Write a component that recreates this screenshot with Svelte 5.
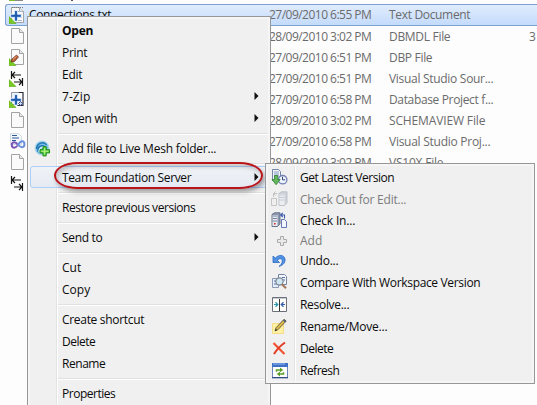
<script>
  const files = [
    { icon: 'text', name: 'Connections.txt', nw: 82, date: '27/09/2010 6:55 PM', type: 'Text Document', w: 81, selected: true },
    { icon: 'blank', date: '28/09/2010 3:02 PM', type: 'DBMDL File', w: 61, size: '3' },
    { icon: 'edit', date: '27/09/2010 6:51 PM', type: 'DBP File', w: 43 },
    { icon: 'source', date: '27/09/2010 6:51 PM', type: 'Visual Studio Sour...', w: 104 },
    { icon: 'project', date: '27/09/2010 6:58 PM', type: 'Database Project f...', w: 104 },
    { icon: 'blank', date: '28/09/2010 3:02 PM', type: 'SCHEMAVIEW File', w: 96 },
    { icon: 'studio', date: '27/09/2010 6:58 PM', type: 'Visual Studio Proj...', w: 101 },
    { icon: 'blank', date: '28/09/2010 3:02 PM', type: 'VS10X File', w: 54 },
    { icon: 'arrows' }
  ];

  const menu = [
    { label: 'Open', w: 31, bold: true },
    { label: 'Print', w: 25 },
    { label: 'Edit', w: 20 },
    { label: '7-Zip', w: 28, sub: true },
    { label: 'Open with', w: 55, sub: true },
    { sep: 8 },
    { label: 'Add file to Live Mesh folder...', w: 154, icon: 'mesh' },
    { sep: 7 },
    { label: 'Team Foundation Server', w: 129, sub: true, hot: true },
    { sep: 8 },
    { label: 'Restore previous versions', w: 133 },
    { sep: 8 },
    { label: 'Send to', w: 40, sub: true },
    { sep: 8 },
    { label: 'Cut', w: 19 },
    { label: 'Copy', w: 28 },
    { sep: 8 },
    { label: 'Create shortcut', w: 82 },
    { label: 'Delete', w: 33 },
    { label: 'Rename', w: 43 },
    { sep: 8 },
    { label: 'Properties', w: 53 }
  ];

  const submenu = [
    { label: 'Get Latest Version', w: 94, h: 22, icon: 'get' },
    { label: 'Check Out for Edit...', w: 106, h: 22, icon: 'checkout', disabled: true },
    { label: 'Check In...', w: 55, h: 21, icon: 'checkin' },
    { label: 'Add', w: 22, h: 19, icon: 'add', disabled: true },
    { label: 'Undo...', w: 38, h: 21, icon: 'undo' },
    { label: 'Compare With Workspace Version', w: 180, h: 22, icon: 'compare' },
    { label: 'Resolve...', w: 49, h: 22, icon: 'resolve' },
    { label: 'Rename/Move...', w: 87, h: 22, icon: 'rename' },
    { label: 'Delete', w: 33, h: 22, icon: 'delete' },
    { label: 'Refresh', w: 39, h: 22, icon: 'refresh' }
  ];

  function fit(node, width) {
    const natural = node.getBoundingClientRect().width;
    node.style.letterSpacing = `${(width + 0.3 - natural) / node.textContent.length}px`;
  }
</script>

{#snippet page()}
  <path d="M2.5.5h8l4 4v11h-12z" fill="#fafafa" stroke="#a3a3a3" />
  <path d="M10.5.5v4h4" fill="#e8e8e8" stroke="#a3a3a3" />
{/snippet}

{#snippet corner()}
  <path d="M0 9.5v7h7z" fill="#7ccb22" stroke="#58a515" stroke-width=".6" />
{/snippet}

{#snippet bigPlus()}
  <path d="M5.4 3.5h3.2v3.7h3.7v3.2H8.6v3.7H5.4v-3.7H1.7V7.2h3.7z" fill="#3f80d2" stroke="#f4f8ff" stroke-width=".8" />
  <path d="M7 4.2v9.2M2.4 8.8h9.2" stroke="#1f59ac" stroke-width="1.6" />
{/snippet}

{#snippet server(x)}
  <path d="M{x} 2.5 {x + 2.5} .8h5.5v11l-2.5 2.7H{x}z" fill="#8e9ab0" stroke="#5c6880" stroke-width=".9" />
  <path d="M{x + .5} 3h5v11h-5z" fill="#e6ebf3" />
  <path d="M{x + .5} 4h4.5M{x + .5} 6.5h4.5M{x + .5} 9h4.5" stroke="#77849c" />
{/snippet}

{#snippet glyph(kind)}
  <svg width="17" height="17" viewBox="0 0 17 17" fill="none" aria-hidden="true">
    {#if kind === 'blank'}
      {@render page()}
    {:else if kind === 'text'}
      {@render page()}
      <path d="M3 .5h11" stroke="#777" stroke-dasharray="1 1" />
      <path d="M5 4.5h8M5 7.5h8M9 10.5h4M9 13.5h4" stroke="#a9b7c4" />
      {@render corner()}
      {@render bigPlus()}
    {:else if kind === 'edit'}
      {@render page()}
      {@render corner()}
      <path d="M2 13 3 10 7.5 6l2 2-4 4.5z" fill="#b95b32" stroke="#693023" stroke-width=".7" />
      <path d="m4 10.5 3.5-3.2" stroke="#f1b187" />
    {:else if kind === 'source' || kind === 'arrows'}
      {#if kind === 'source'}{@render corner()}{/if}
      <path d="M2.5 1v8M3 5h9M6 2 3 5l3 3M13.5 8v8M5 12h8M10 9l3 3-3 3" stroke="#151515" stroke-width="1.2" />
    {:else if kind === 'project'}
      <path d="M2.5 1.5h8v12h-8z" fill="#eef3fa" stroke="#8b96aa" />
      <path d="M9.5 1.5h4.5v13h-6" fill="#fff" stroke="#2a2d38" stroke-width="1.2" />
      {@render corner()}
      {@render bigPlus()}
      <path d="m9.5 12.5 2-2 2 2-2 2z" fill="#cdd8f2" stroke="#3b4b8c" />
    {:else if kind === 'studio'}
      <path d="M1.5.5h8l3 3v8h-11z" fill="#f4f7fc" stroke="#d3dbe7" />
      <path d="M3 2.5h5M3 5h7M3 7.5h4" stroke="#31599d" />
      <path d="M9 12C7.5 9.8 6.3 9 5 9.2c-3 .5-3 5.1 0 5.5 1.6.1 2.8-1.2 4-2.7" stroke="#7c55b4" stroke-width="2" />
      <path d="M8.6 12.3c1.6-2.3 2.9-4.1 4.6-4 3 .3 3 5.6 0 5.9-1.6.1-2.9-1-4.2-2.6" stroke="#6d8edc" stroke-width="2" />
    {:else if kind === 'mesh'}
      <circle cx="8" cy="8" r="7" fill="#7cc0e8" stroke="#b4d9ef" />
      <path d="M2.5 9C3 2.5 10 1 12.5 5M4 12C3 5 10 4 12 9" stroke="#1f76b1" stroke-width="1.4" />
      <path d="M5 12c0-4 3-6 6-4" stroke="#d9f2ff" stroke-width="1.4" />
      <path d="M9 6.7h3.2v3H15.5v3.2h-3.3v3H9v-3H6V9.7h3z" fill="#6bd341" stroke="#19891b" />
      <path d="M10.6 8v6.5M7.3 11.3h7" stroke="#b3f28a" />
    {:else if kind === 'get'}
      <path d="M1.5.5h6l2 2v9h-8z" fill="#f2f6fc" stroke="#7386a8" />
      <path d="M3 3h5M3 5h5M3 7h5" stroke="#8195bb" />
      <circle cx="11.7" cy="10.7" r="4.2" fill="#edf3ff" stroke="#7280b4" stroke-width="1.3" />
      <path d="M11.5 7.8v3h2.6" stroke="#344674" />
      <path d="M3.5 6.5h3.2v4h2.4L5.1 15.7 1 10.5h2.5z" fill="#64b85b" stroke="#2c7c36" stroke-width=".8" />
    {:else if kind === 'checkout'}
      <g opacity=".35">
        {@render server(8)}
        <path d="M.5 7.5h5v7h-5zM2.5 6V2.5h4M4.5.5l-2 2 2 2" fill="#eee" stroke="#777" />
      </g>
    {:else if kind === 'checkin'}
      {@render server(1)}
      <path d="M3 11.8h1.6" stroke="#d22" stroke-width="1.5" />
      <path d="M10.5 7.5h3l2 2v6h-5z" fill="#f3f6ff" stroke="#6478b2" />
      <path d="M13.5 6.5V3H10M11.7 1l-2 2 2 2" stroke="#3a5cad" stroke-width="1.1" />
    {:else if kind === 'add'}
      <path d="M9.5 4.5h3v3h3v3h-3v3h-3v-3h-3v-3h3z" fill="#e9e9e9" stroke="#aaa" />
    {:else if kind === 'undo'}
      <path d="M2 4v6.5h6.5L6.4 8.3C9 5.4 12 6.5 11.2 10c-.3 1.5-1.5 3-3.2 4.5 4.6-1.4 6.5-4.5 6-7.4C13.2 2.7 8 2 4.3 6.1z" fill="#5292e5" stroke="#2867bf" stroke-width=".8" />
    {:else if kind === 'compare'}
      <path d="M7.5.5h6l2 2v8h-8z" fill="#f3f6fc" stroke="#7484a2" />
      <path d="M1.5 4.5h6v9h-6z" fill="#e9effa" stroke="#8a99b7" />
      <path d="M11 3.5h3M12 6h2M3 7h3M3 10h3" stroke="#536da5" />
      <circle cx="8.5" cy="7.5" r="3.6" fill="#cfe6f5" stroke="#7d8791" stroke-width="1.2" />
      <path d="m11 10.3 4 4" stroke="#a5775d" stroke-width="2.2" />
    {:else if kind === 'resolve'}
      <path d="M1.5 1.5h14v14h-14z" fill="#fffef8" stroke="#6b6f79" />
      <path d="M2 2.5h13" stroke="#c8ccd4" />
      <path d="M8.5 3v12" stroke="#333" />
      <path d="M3 8.5h3.5M4.5 6.3l2.3 2.2-2.3 2.2" stroke="#2b97ac" stroke-width="1.2" />
      <path d="M14 8.5h-3.5M12.5 6.3l-2.3 2.2 2.3 2.2" stroke="#345db0" stroke-width="1.2" />
    {:else if kind === 'rename'}
      <path d="M1.5 5.5h11v10h-11z" fill="#fff2a5" stroke="#f4dc88" />
      <path d="m4 13 1-3.2 8-8.5L15.2 3 7 11.6z" fill="#dfbd49" stroke="#5e513d" stroke-width=".9" />
      <path d="m4 13 2-1-1-1z" fill="#222" />
      <path d="m12.5 2 2 2" stroke="#455b85" stroke-width="1.5" />
    {:else if kind === 'delete'}
      <path d="M2.5 3 13.5 14" stroke="#f15333" stroke-width="2.2" />
      <path d="M14 2.5C9 6 6 9 3 14" stroke="#e33b24" stroke-width="2" />
    {:else if kind === 'refresh'}
      <path d="M1.5 1.5h15v14h-15z" fill="#fff" stroke="#6a86bb" />
      <path d="M1 1h16v4H1z" fill="#3f70c7" />
      <path d="M2 2h12" stroke="#91b7f1" />
      <path d="M1 15.7h16" stroke="#2b4686" stroke-width="1.2" />
      <path d="M5.5 9.8V8h4" stroke="#5a9e28" stroke-width="1.5" />
      <path d="m9 5.5 3.2 2.5L9 10.3zM9 9.5 5.8 12 9 14.5z" fill="#5a9e28" />
      <path d="M12.5 10.2V12h-4" stroke="#5a9e28" stroke-width="1.5" />
    {/if}
  </svg>
{/snippet}

<main>
  <div class="previous"><i></i><b></b></div>
  <section class="files">
    {#each files as file}
      <div class="file" class:selected={file.selected}>
        <span class="ficon">{@render glyph(file.icon)}</span>
        <span class="name">{#if file.name}<span use:fit={file.nw}>{file.name}</span>{/if}</span>
        <span class="date">{#if file.date}<span use:fit={102}>{file.date}</span>{/if}</span>
        <span class="type">{#if file.type}<span use:fit={file.w}>{file.type}</span>{/if}</span>
        <span class="size">{file.size ?? ''}</span>
      </div>
    {/each}
  </section>

  <nav class="menu context">
    {#each menu as item}
      {#if item.sep}
        <div class="sep" style:height="{item.sep}px"></div>
      {:else}
        <div class="item" class:hot={item.hot} class:bold={item.bold}>
          <span class="micon">{#if item.icon}{@render glyph(item.icon)}{/if}</span>
          <span use:fit={item.w}>{item.label}</span>
          {#if item.sub}
            <svg class="chev" width="5" height="8" viewBox="0 0 5 8" aria-hidden="true"><path d="M.5 0v8l4-4z" fill="#111" /></svg>
          {/if}
        </div>
      {/if}
    {/each}
  </nav>

  <div class="ring"></div>

  <nav class="menu team">
    {#each submenu as item}
      <div class="item" class:disabled={item.disabled} style:height="{item.h}px">
        <span class="micon">{@render glyph(item.icon)}</span>
        <span use:fit={item.w}>{item.label}</span>
      </div>
    {/each}
  </nav>
</main>

<style>
  :global(body) { margin: 0; }
  main {
    position: relative;
    width: 537px;
    height: 405px;
    overflow: hidden;
    background: #fdfdfd;
    color: #0b0b0b;
    font: 12px/20px "Open Sans", "Noto Sans", sans-serif;
    white-space: nowrap;
  }
  svg { display: block; flex: none; }
  .previous { display: flex; height: 4px; padding-left: 9px; }
  .previous i { width: 14px; height: 1px; background: linear-gradient(90deg, #7bbd2f 6px, #888 6px); }
  .previous b { width: 2px; height: 1px; margin-left: 48px; background: #555; }
  .file { display: flex; align-items: center; box-sizing: border-box; height: 21px; padding-left: 9px; }
  .file:first-child { height: 22px; }
  .file.selected {
    margin-left: 5px;
    padding-left: 3px;
    border: 1px solid #7da2ce;
    border-right: 0;
    border-radius: 3px 0 0 3px;
    background: linear-gradient(#e0ecfd, #c4dbfc);
  }
  .ficon { width: 20px; }
  .name { width: 240px; }
  .date { width: 120px; color: #6b6b6b; }
  .type { width: 140px; color: #6b6b6b; }
  .size { color: #6b6b6b; }
  .menu {
    position: absolute;
    box-sizing: border-box;
    padding: 2px;
    border: 1px solid #979797;
    background: linear-gradient(90deg, transparent 28px, #e2e3e3 28px, #e2e3e3 29px, #fff 29px, #fff 30px, transparent 30px) 0 2px / 100% calc(100% - 4px) no-repeat, #f0f0f0;
    box-shadow: inset 0 0 0 2px #f5f5f5;
  }
  .context { left: 27px; top: 16px; width: 244px; height: 400px; }
  .team { left: 265px; top: 163px; width: 270px; height: 221px; }
  .item { position: relative; display: flex; align-items: center; box-sizing: border-box; height: 22px; line-height: 21px; }
  .micon { width: 28px; padding-left: 4px; flex: none; }
  .team .micon { padding-left: 3px; width: 29px; }
  .context .item { padding-right: 9px; }
  .context .micon { width: 28px; }
  .chev { margin-left: auto; }
  .bold { font-weight: 700; }
  .disabled { color: #7c7c7c; }
  .hot::before {
    content: "";
    position: absolute;
    inset: 0 1px 0 0;
    box-sizing: border-box;
    border: 1px solid #aecff7;
    border-radius: 3px;
    background: linear-gradient(#f0f3f8aa, #dfe8f5aa);
  }
  .hot > * { position: relative; }
  .sep {
    margin-left: 28px;
    background: linear-gradient(#e0e0e0 50%, #fff 50%) 0 4px / 100% 2px no-repeat;
  }
  .ring {
    position: absolute;
    left: 54px;
    top: 162px;
    width: 209px;
    height: 27px;
    box-sizing: border-box;
    border: 2px solid #b9141a;
    border-radius: 24px / 14px;
    box-shadow: 2px 3px 4px #0005, inset 2px 3px 4px #0003;
  }
</style>
